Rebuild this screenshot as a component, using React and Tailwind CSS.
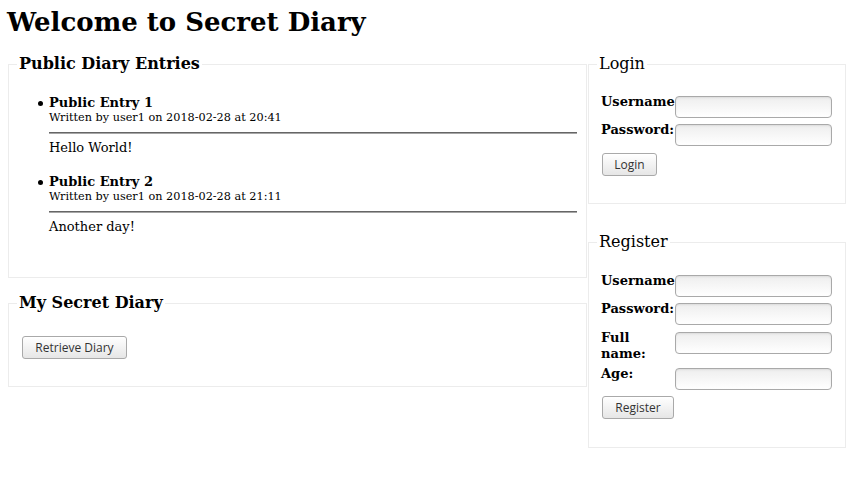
import React from "react";

const btn =
  "inline-flex items-center justify-center h-[23px] rounded-[3px] border border-[#a9a9a9] bg-gradient-to-b from-white to-[#e6e6e6] text-[#333] text-[12px] font-['Open_Sans',sans-serif] leading-none shadow-[inset_0_1px_0_#fff]";
const input =
  "block h-[22px] w-[157px] rounded-[4px] border border-[#a9a9a9] bg-gradient-to-b from-[#eeeeee] to-white shadow-[inset_0_1px_2px_rgba(0,0,0,0.08)]";

function Row({ label, top = "mt-[4px]" }) {
  return (
    <div className={`flex items-start ${top}`}>
      <div className="w-[74px] shrink-0 text-[13px] leading-[16px] font-bold">{label}</div>
      <div className={`${input} mt-[2px]`} />
    </div>
  );
}

function Entry({ title, meta, body, first }) {
  return (
    <li className={`relative text-[13px] leading-[16px] ${first ? "" : "mt-[18px]"}`}>
      <span className="absolute left-[-11px] top-[6px] h-[5px] w-[5px] rounded-full bg-black" />
      <div className="font-bold">{title}</div>
      <div className="text-[11.25px] leading-[14px]">{meta}</div>
      <div className="mt-[7px] h-[2px] border-t border-t-[#666] border-b border-b-[#a6a6a6]" />
      <div className="mt-[6px]">{body}</div>
    </li>
  );
}

export default function App() {
  return (
    <div className="min-h-[477px] bg-white px-[8px] text-black font-['DejaVu_Serif',serif]">
      <h1 className="-ml-[1px] pt-[6px] text-[26px] leading-[33px] font-bold">Welcome to Secret Diary</h1>
      <div className="mt-[15px] flex gap-[1px]">
        <div className="w-[579px] shrink-0">
          <fieldset className="border border-[#ececec] pl-[8px] pr-[9px] pb-[42px]">
            <legend className="px-[2px] text-[16px] leading-[20px] font-bold">Public Diary Entries</legend>
            <ul className="mt-[21px] list-none pl-[32px]">
              <Entry first title="Public Entry 1" meta="Written by user1 on 2018-02-28 at 20:41" body="Hello World!" />
              <Entry title="Public Entry 2" meta="Written by user1 on 2018-02-28 at 21:11" body="Another day!" />
            </ul>
          </fieldset>
          <fieldset className="mt-[15px] border border-[#ececec] pl-[8px] pr-[9px] pb-[27px]">
            <legend className="px-[2px] text-[16px] leading-[20px] font-bold">My Secret Diary</legend>
            <button className={`${btn} mt-[23px] ml-[5px] w-[105px]`}>Retrieve Diary</button>
          </fieldset>
        </div>
        <div className="w-[258px] shrink-0">
          <fieldset className="border border-[#ececec] pl-[8px] pr-[9px] pb-[27px]">
            <legend className="px-[2px] text-[16px] leading-[20px]">Login</legend>
            <div className="pl-[4px]">
              <Row label="Username" top="mt-[20px]" />
              <Row label="Password:" />
              <button className={`${btn} mt-[7px] ml-[1px] w-[55px]`}>Login</button>
            </div>
          </fieldset>
          <fieldset className="mt-[28px] border border-[#ececec] pl-[8px] pr-[9px] pb-[28px]">
            <legend className="px-[2px] text-[16px] leading-[20px]">Register</legend>
            <div className="pl-[4px]">
              <Row label="Username" top="mt-[21px]" />
              <Row label="Password:" />
              <Row label="Full name:" top="mt-[5px]" />
              <Row label="Age:" />
              <button className={`${btn} mt-[6px] ml-[1px] w-[72px]`}>Register</button>
            </div>
          </fieldset>
        </div>
      </div>
    </div>
  );
}
